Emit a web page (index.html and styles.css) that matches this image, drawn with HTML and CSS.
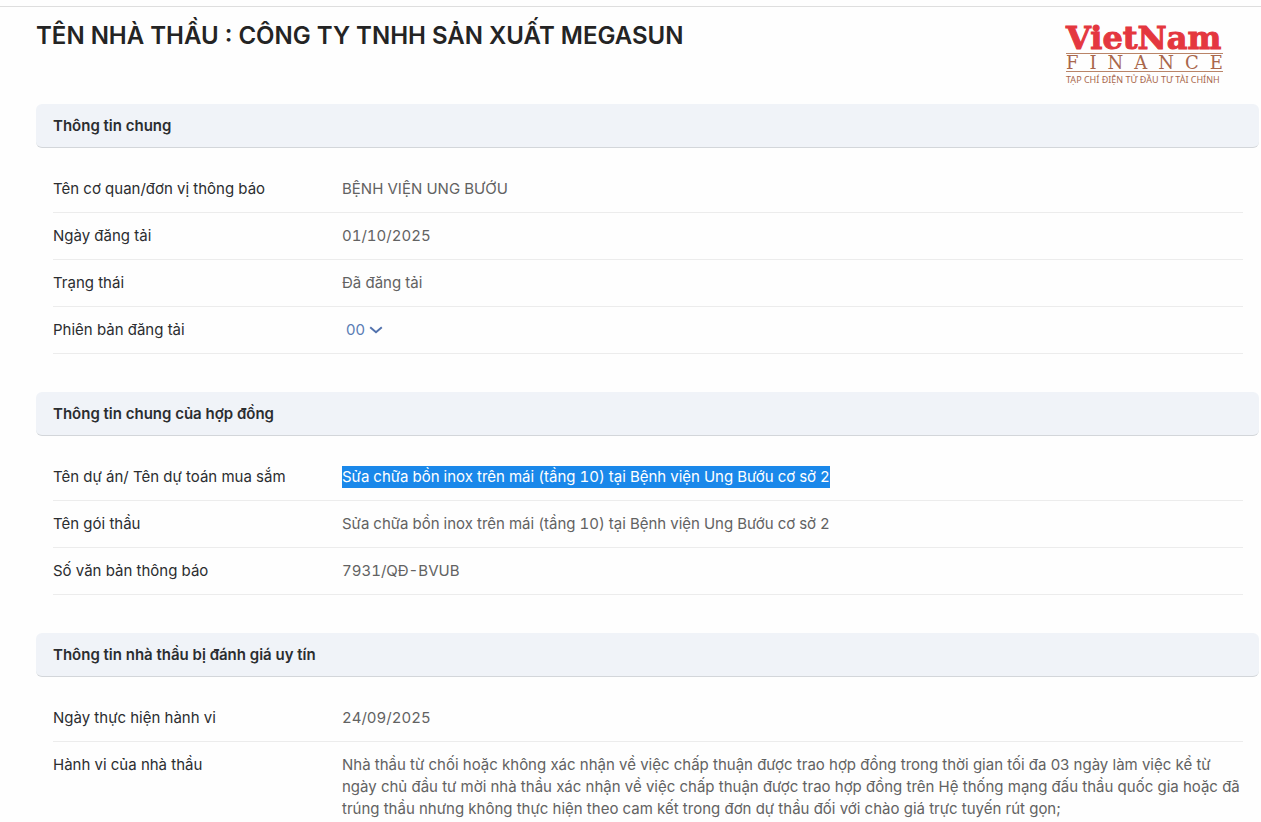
FILE: index.html
```html
<!DOCTYPE html>
<html lang="vi">
<head>
  <meta charset="utf-8">
  <meta name="viewport" content="width=device-width, initial-scale=1">
  <title>Công ty TNHH Sản xuất Megasun</title>
  <link rel="stylesheet" href="styles.css">
</head>
<body>
  <main class="page">
    <header class="page-header">
      <h1 class="page-title">TÊN NHÀ THẦU : CÔNG TY TNHH SẢN XUẤT MEGASUN</h1>
      <div class="logo">
        <span class="logo-name">VietNam</span>
        <span class="logo-finance">FINANCE</span>
        <span class="logo-tagline">TẠP CHÍ ĐIỆN TỬ ĐẦU TƯ TÀI CHÍNH</span>
      </div>
    </header>

    <section class="section">
      <h2 class="section-title">Thông tin chung</h2>
      <dl class="rows">
        <div class="row"><dt class="label">Tên cơ quan/đơn vị thông báo</dt><dd class="value">BỆNH VIỆN UNG BƯỚU</dd></div>
        <div class="row"><dt class="label">Ngày đăng tải</dt><dd class="value numeric">01/10/2025</dd></div>
        <div class="row"><dt class="label">Trạng thái</dt><dd class="value">Đã đăng tải</dd></div>
        <div class="row">
          <dt class="label"><label for="version">Phiên bản đăng tải</label></dt>
          <dd class="value version">
            <select id="version" class="version-select"><option>00</option></select>
            <svg class="chevron" viewBox="0 0 14 8" aria-hidden="true"><path d="M1.200 1.300 7 6.200l5.800-4.900"/></svg>
          </dd>
        </div>
      </dl>
    </section>

    <section class="section">
      <h2 class="section-title">Thông tin chung của hợp đồng</h2>
      <dl class="rows">
        <div class="row"><dt class="label">Tên dự án/ Tên dự toán mua sắm</dt><dd class="value numeric"><mark class="selected">Sửa chữa bồn inox trên mái (tầng 10) tại Bệnh viện Ung Bướu cơ sở 2</mark></dd></div>
        <div class="row"><dt class="label">Tên gói thầu</dt><dd class="value numeric">Sửa chữa bồn inox trên mái (tầng 10) tại Bệnh viện Ung Bướu cơ sở 2</dd></div>
        <div class="row"><dt class="label">Số văn bản thông báo</dt><dd class="value numeric">7931/QĐ-BVUB</dd></div>
      </dl>
    </section>

    <section class="section">
      <h2 class="section-title">Thông tin nhà thầu bị đánh giá uy tín</h2>
      <dl class="rows">
        <div class="row"><dt class="label">Ngày thực hiện hành vi</dt><dd class="value numeric">24/09/2025</dd></div>
        <div class="row row-last"><dt class="label">Hành vi của nhà thầu</dt><dd class="value">Nhà thầu từ chối hoặc không xác nhận về việc chấp thuận được trao hợp đồng trong thời gian tối đa 03 ngày làm việc kể từ ngày chủ đầu tư mời nhà thầu xác nhận về việc chấp thuận được trao hợp đồng trên Hệ thống mạng đấu thầu quốc gia hoặc đã trúng thầu nhưng không thực hiện theo cam kết trong đơn dự thầu đối với chào giá trực tuyến rút gọn;</dd></div>
      </dl>
    </section>
  </main>
</body>
</html>
```
FILE: styles.css
```css
* {
  box-sizing: border-box;
}

body {
  margin: 0;
  padding-top: 6px;
  background: #fefefe;
  color: #2b2d30;
  font: 15px/22px Inter, "Noto Sans", sans-serif;
}

.page {
  padding: 0 2px 0 36px;
  border-top: 1px solid #dedede;
}

.page-header {
  display: flex;
  justify-content: space-between;
  align-items: flex-start;
  padding: 13px 36px 16px 0;
}

.page-title {
  margin: 0;
  color: #242424;
  font-size: 24px;
  line-height: 32px;
  font-weight: 600;
}

.logo {
  display: flex;
  flex-direction: column;
  width: 157px;
  padding-top: 3px;
  color: #a9674c;
  white-space: nowrap;
}

.logo-name {
  color: #e4373f;
  font: bold 32px/30px "DejaVu Serif", serif;
  -webkit-text-stroke: 1px #e4373f;
}

.logo-finance {
  border-top: 1px solid #b98468;
  border-bottom: 1px solid #b98468;
  font: 18px/17px "DejaVu Serif", serif;
  letter-spacing: 11px;
}

.logo-tagline {
  font: 9px/16px "Noto Sans", sans-serif;
}

.section {
  margin-bottom: 38px;
}

.section:last-child {
  margin-bottom: 0;
}

.section-title {
  margin: 0;
  padding: 11px 17px 10px;
  border-bottom: 1px solid #d3d6da;
  border-radius: 6px;
  background: #f0f3f8;
  font-size: 15px;
  line-height: 22px;
  font-weight: 600;
}

.rows {
  margin: 0;
  padding: 18px 16px 0 17px;
}

.row {
  display: grid;
  grid-template-columns: 289px 1fr;
  padding: 12px 0;
  border-bottom: 1px solid #ececec;
}

.row-last {
  padding-bottom: 0;
  border-bottom: 0;
}

.value {
  margin: 0;
  color: #626262;
}

.numeric {
  font-variant-numeric: tabular-nums;
}

.selected {
  display: inline-block;
  background: #1a88ea;
  color: #fff;
}

.version {
  display: flex;
  align-items: center;
  gap: 4px;
  padding-left: 4px;
}

.version-select {
  appearance: none;
  padding: 0;
  border: 0;
  background: none;
  color: #5a7db5;
  font: inherit;
}

.chevron {
  width: 14px;
  height: 8px;
  fill: none;
  stroke: #5272ad;
  stroke-width: 2;
}
```
